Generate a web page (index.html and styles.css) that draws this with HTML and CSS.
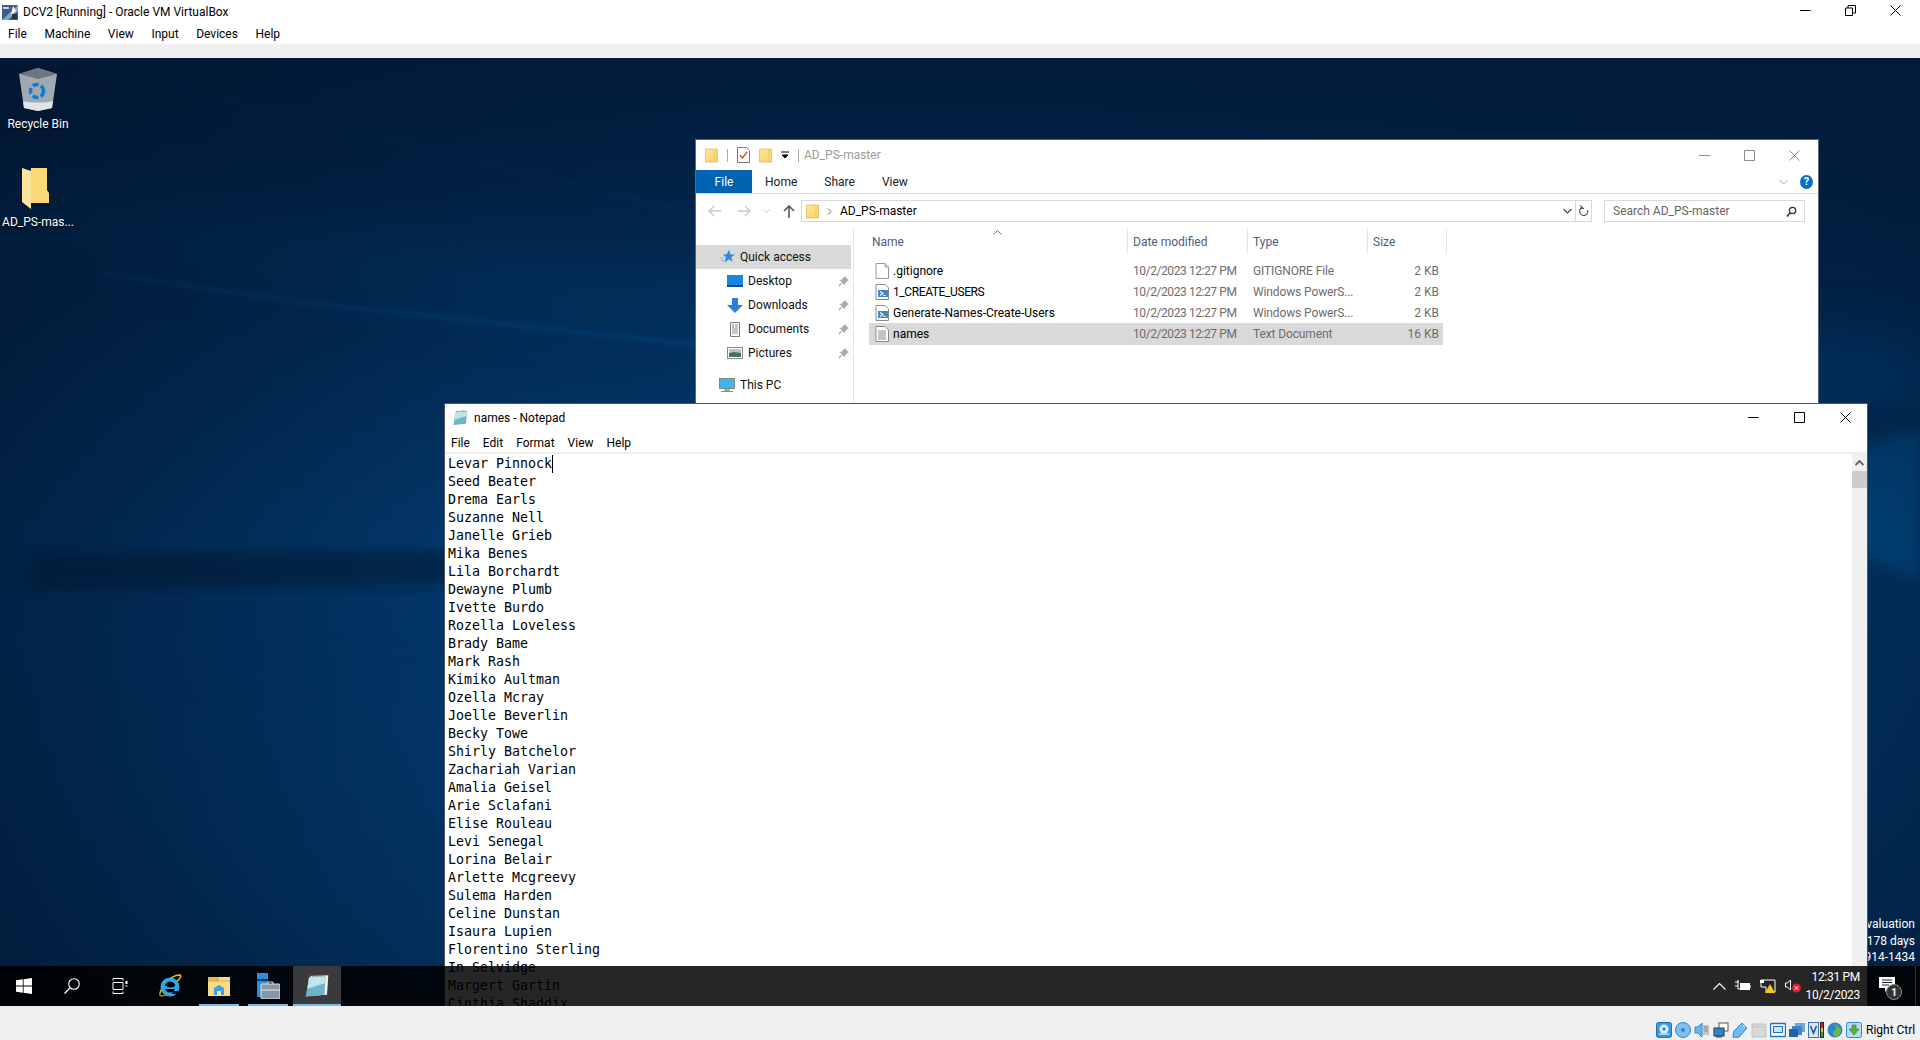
FILE: index.html
```html
<!DOCTYPE html>
<html lang="en">
<head>
<meta charset="utf-8">
<title>DCV2 [Running] - Oracle VM VirtualBox</title>
<link rel="stylesheet" href="styles.css">
</head>
<body>
<svg class="defs" width="0" height="0">
  <defs>
    <linearGradient id="fold" x1="0" y1="0" x2="1" y2="1"><stop offset="0" stop-color="#ffe9a0"/><stop offset="1" stop-color="#f6cf62"/></linearGradient>
    <symbol id="folder" viewBox="0 0 14 16"><path d="M.5 1h13v14H.5z" fill="url(#fold)" stroke="#e2b84f" stroke-width=".8"/><path d="M10.500 1v14" stroke="#f2cc66" stroke-width="1"/></symbol>
    <symbol id="pin" viewBox="0 0 12 12"><path d="M7 1l4 4-1.500.5-2 2-.3 2L5 7.300 2 10.500l-.8-.8L4.500 6.700 2.300 4.500l2-.3 2-2z" fill="#a9a9a9"/></symbol>
    <symbol id="psfile" viewBox="0 0 14 16"><path d="M1 .5h9l3.500 3.500v11.500H1z" fill="#fff" stroke="#8a8a8a"/><rect x="3" y="6" width="10" height="7" fill="#3f8ac6"/><path d="M5 7.500l3 2-3 2" fill="none" stroke="#fff" stroke-width="1.100"/><path d="M8 11.500h3" stroke="#cfe4f5"/></symbol>
    <symbol id="txtfile" viewBox="0 0 14 16"><path d="M1 .5h9l3.500 3.500v11.500H1z" fill="#fff" stroke="#8a8a8a"/><path d="M3 5h8M3 7h8M3 9h8M3 11h8M3 13h8" stroke="#8a8a8a"/></symbol>
    <symbol id="blank" viewBox="0 0 14 16"><path d="M1 .5h9l3.500 3.500v11.500H1z" fill="#fff" stroke="#9a9a9a"/><path d="M10 .5V4h3.500" fill="none" stroke="#9a9a9a"/></symbol>
    <symbol id="notepad" viewBox="0 0 18 18"><path d="M4 1.500L17.500 1l-1 14.500L3 16.500z" fill="#eef3f3"/><path d="M3 2.500L15.500 1.500 14.500 15.500 .5 17z" fill="#6fb3c9"/><path d="M3 2.500L15.500 1.500 15 7 1.800 11z" fill="#bfe4ea"/><path d="M3.500 1.800L15.500 1" stroke="#7a7a7a" stroke-width="1.400" stroke-dasharray="1 1"/></symbol>
    <radialGradient id="wpA" cx=".42" cy=".55" r=".75"><stop offset="0" stop-color="#03437f"/><stop offset=".55" stop-color="#023566"/><stop offset="1" stop-color="#011f40"/></radialGradient>
    <linearGradient id="wpTop" x1="0" y1="0" x2="0" y2="1"><stop offset="0" stop-color="#011a38" stop-opacity=".9"/><stop offset=".3" stop-color="#011a38" stop-opacity=".35"/><stop offset=".5" stop-color="#011a38" stop-opacity="0"/></linearGradient>
    <linearGradient id="wpLeft" x1="0" y1="0" x2="1" y2="0"><stop offset="0" stop-color="#01142c" stop-opacity=".55"/><stop offset=".25" stop-color="#01142c" stop-opacity=".12"/><stop offset=".4" stop-color="#01142c" stop-opacity="0"/></linearGradient>
    <filter id="bl8"><feGaussianBlur stdDeviation="8"/></filter>
    <filter id="bl3"><feGaussianBlur stdDeviation="2.500"/></filter>
    <filter id="bl30"><feGaussianBlur stdDeviation="30"/></filter>
  </defs>
</svg>

<header class="vb-title">
  <svg class="vb-logo" width="16" height="16" viewBox="0 0 16 16"><rect x="0" y="1" width="16" height="15" fill="#3f5c82"/><path d="M0 16L16 1v6L6 16z" fill="#7da6cf"/><rect x="1" y="3" width="6" height="2" fill="#c9d6e5"/><rect x="10" y="10" width="5" height="5" fill="#22364f"/><path d="M11 2l3 5-5 4z" fill="#fff"/></svg>
  <span>DCV2 [Running] - Oracle VM VirtualBox</span>
  <div class="vb-ctrls">
    <svg width="11" height="11" viewBox="0 0 11 11"><path d="M0 5.500h10.500" stroke="#000"/></svg>
    <svg width="11" height="11" viewBox="0 0 11 11"><path d="M.5 3h7v7.500h-7zM3 3V.5h7.500V8H8" fill="none" stroke="#000"/></svg>
    <svg width="11" height="11" viewBox="0 0 11 11"><path d="M.5.500l10 10M10.500.500l-10 10" stroke="#000"/></svg>
  </div>
</header>
<nav class="vb-menu">
  <span>File</span><span>Machine</span><span>View</span><span>Input</span><span>Devices</span><span>Help</span>
</nav>
<div class="vb-strip"></div>

<main class="guest">
  <svg class="wallpaper" width="1920" height="948" viewBox="0 0 1920 948">
    <rect width="1920" height="948" fill="url(#wpA)"/>
    <path d="M0 120L500 190 1000 270 1920 290V330L1000 300 400 230 0 170z" fill="#04528f" opacity=".55" filter="url(#bl30)"/>
    <path d="M60 0L300 60 700 157" fill="none" stroke="#0a4a85" stroke-width="5" opacity=".45" filter="url(#bl3)"/>
    <path d="M100 215L300 244 700 287 1000 330 1300 340" fill="none" stroke="#0a5ca6" stroke-width="4" opacity=".7" filter="url(#bl3)"/>
    <path d="M1820 430C1850 390 1880 380 1920 372V520C1880 510 1850 490 1820 480z" fill="#06528f" opacity=".45" filter="url(#bl8)"/>
    <path d="M0 540L1000 590 1000 640 0 620z" fill="#02396f" opacity=".5" filter="url(#bl30)"/>
    <path d="M30 497L460 492 460 526 30 532z" fill="#01132c" opacity=".5" filter="url(#bl8)"/>
    <rect width="1920" height="948" fill="url(#wpTop)"/>
    <rect width="1920" height="948" fill="url(#wpLeft)"/>
  </svg>

  <div class="desk-icon desk-recycle">
    <svg width="38" height="43" viewBox="0 0 38 43"><path d="M0 6L19 0l19 6-5 34-14 3-14-3z" fill="#9fa9b1"/><path d="M0 6l19 5 19-5-19-6z" fill="#6b7680"/><path d="M4 33c8 2 22 2 30 0l-1 7-14 3-14-3z" fill="#dfe3e6"/><circle cx="18" cy="23" r="6.500" fill="none" stroke="#1479d6" stroke-width="3.500" stroke-dasharray="6 2.500"/></svg>
    <span>Recycle Bin</span>
  </div>
  <div class="desk-icon desk-folder">
    <svg width="28" height="41" viewBox="0 0 28 41"><path d="M9 0h16v22l2 3v10H8V12z" fill="#f9d978"/><path d="M0 0l9 3v38L0 34z" fill="#fce59a"/></svg>
    <span>AD_PS-mas...</span>
  </div>

  <div class="watermark">
    <div>Windows Server 2019 Standard Evaluation</div>
    <div>Windows License valid for 178 days</div>
    <div>Build 17763.rs5_release.180914-1434</div>
  </div>

  <section class="win explorer">
    <div class="ex-title">
      <svg width="13" height="15"><use href="#folder"/></svg>
      <i class="qsep"></i>
      <svg width="13" height="16" viewBox="0 0 13 16"><path d="M.5.500h9l3 3v12H.5z" fill="#fff" stroke="#777"/><path d="M3 8l2.500 3L10 5" fill="none" stroke="#d8471e" stroke-width="1.300"/></svg>
      <svg width="13" height="15"><use href="#folder"/></svg>
      <svg width="8" height="8" viewBox="0 0 8 8"><path d="M0 1h8M1 4h6l-3 3z" stroke="#000" stroke-width="1" fill="#000"/></svg>
      <i class="qsep"></i>
      <span class="ex-name">AD_PS-master</span>
      <div class="ex-ctrls">
        <svg width="11" height="11" viewBox="0 0 11 11"><path d="M0 5.500h11" stroke="#8a8a8a"/></svg>
        <svg width="11" height="11" viewBox="0 0 11 11"><path d="M.5.500h10v10H.5z" fill="none" stroke="#8a8a8a"/></svg>
        <svg width="11" height="11" viewBox="0 0 11 11"><path d="M.5.500l10 10M10.500.500l-10 10" stroke="#8a8a8a"/></svg>
      </div>
    </div>
    <div class="ex-tabs">
      <span class="tab-file">File</span>
      <span class="tab">Home</span><span class="tab">Share</span><span class="tab">View</span>
      <div class="ex-help">
        <svg width="9" height="6" viewBox="0 0 9 6"><path d="M.5 1l4 4 4-4" fill="none" stroke="#a9a9a9"/></svg>
        <span class="help-dot">?</span>
      </div>
    </div>
    <div class="ex-addr">
      <div class="nav-btns">
        <svg width="13" height="12" viewBox="0 0 13 12"><path d="M6 1L1 6l5 5M1 6h12" fill="none" stroke="#c9c9c9" stroke-width="1.400"/></svg>
        <svg width="13" height="12" viewBox="0 0 13 12"><path d="M7 1l5 5-5 5M12 6H0" fill="none" stroke="#c9c9c9" stroke-width="1.400"/></svg>
        <svg width="7" height="5" viewBox="0 0 7 5"><path d="M.5.500l3 3 3-3" fill="none" stroke="#c9c9c9"/></svg>
        <svg width="12" height="13" viewBox="0 0 12 13"><path d="M1 6l5-5 5 5M6 1v12" fill="none" stroke="#555" stroke-width="1.600"/></svg>
      </div>
      <div class="addr-box">
        <svg width="13" height="15"><use href="#folder"/></svg>
        <svg width="5" height="7" viewBox="0 0 5 7"><path d="M1 .5l3 3-3 3" fill="none" stroke="#666"/></svg>
        <span>AD_PS-master</span>
        <svg class="addr-drop" width="9" height="6" viewBox="0 0 9 6"><path d="M.5 1l4 4 4-4" fill="none" stroke="#444" stroke-width="1.200"/></svg>
        <div class="addr-refresh"><svg width="10" height="12" viewBox="0 0 10 12"><path d="M8.500 5a4 4 0 1 1-6.500-1.500L4 2M2 0v3.500h3" fill="none" stroke="#555" stroke-width="1.100"/></svg></div>
      </div>
      <div class="search-box">
        <span>Search AD_PS-master</span>
        <svg width="11" height="11" viewBox="0 0 11 11"><circle cx="6.500" cy="4.500" r="3.200" fill="none" stroke="#333" stroke-width="1.300"/><path d="M4 7l-3 3.500" stroke="#333" stroke-width="1.600"/></svg>
      </div>
    </div>
    <div class="ex-body">
      <aside class="ex-nav">
        <div class="nav-row nav-top nav-sel">
          <svg width="15" height="14" viewBox="0 0 15 14"><path d="M9 0l1.500 4.500H15l-3.700 2.800L12.700 12 9 9.200 4.500 12.500 6 7.300 3 4.500h3.500z" fill="#2a8be0"/><path d="M0 8h4M1 10.500h3" stroke="#8ac1ef"/></svg>
          <span>Quick access</span>
        </div>
        <div class="nav-row nav-sub">
          <svg width="16" height="12" viewBox="0 0 16 12"><rect width="16" height="11" fill="#1b86e0"/><rect y="10" width="16" height="2" fill="#0c4f8a"/></svg>
          <span>Desktop</span><svg class="pin" width="13" height="13"><use href="#pin"/></svg>
        </div>
        <div class="nav-row nav-sub">
          <svg width="16" height="15" viewBox="0 0 16 15"><path d="M5 0h6v7h5l-8 8-8-8h5z" fill="#2a80d8"/></svg>
          <span>Downloads</span><svg class="pin" width="13" height="13"><use href="#pin"/></svg>
        </div>
        <div class="nav-row nav-sub">
          <svg width="16" height="15" viewBox="0 0 16 15"><path d="M3.500.5h9v14h-9z" fill="#fff" stroke="#7b7b7b"/><path d="M5 3h2M5 5h2" stroke="#2a80d8"/><path d="M8 3h3M8 5h3M5 7h6M5 9h6M5 11h6" stroke="#8a8a8a"/></svg>
          <span>Documents</span><svg class="pin" width="13" height="13"><use href="#pin"/></svg>
        </div>
        <div class="nav-row nav-sub">
          <svg width="16" height="12" viewBox="0 0 16 12"><rect x=".5" y=".5" width="15" height="11" fill="#fff" stroke="#8a8a8a"/><rect x="2" y="2" width="12" height="4" fill="#a8c8d8"/><path d="M2 6l5-1 7 1v4H2z" fill="#47705c"/></svg>
          <span>Pictures</span><svg class="pin" width="13" height="13"><use href="#pin"/></svg>
        </div>
        <div class="nav-row nav-top nav-pc">
          <svg width="16" height="15" viewBox="0 0 16 15"><rect x=".5" y=".5" width="15" height="10" fill="#41b3ea" stroke="#7f8a92"/><path d="M6 11h4v2H6zM2 13.500h12" stroke="#8a8a8a" fill="#c9c9c9"/></svg>
          <span>This PC</span>
        </div>
      </aside>
      <div class="ex-list">
        <div class="ex-head">
          <span class="col-name">Name<svg class="sort" width="9" height="5" viewBox="0 0 9 5"><path d="M.5 4.500l4-4 4 4" fill="none" stroke="#777"/></svg></span>
          <span class="col-date">Date modified</span>
          <span class="col-type">Type</span>
          <span class="col-size">Size</span>
        </div>
        <div class="ex-rows">
          <div class="row"><span class="r-name"><svg width="14" height="16"><use href="#blank"/></svg>.gitignore</span><span class="r-dim r-date">10/2/2023 12:27 PM</span><span class="r-dim r-type">GITIGNORE File</span><span class="r-dim r-size">2 KB</span></div>
          <div class="row"><span class="r-name"><svg width="14" height="16"><use href="#psfile"/></svg><span class="caps">1_CREATE_USERS</span></span><span class="r-dim r-date">10/2/2023 12:27 PM</span><span class="r-dim r-type">Windows PowerS...</span><span class="r-dim r-size">2 KB</span></div>
          <div class="row"><span class="r-name"><svg width="14" height="16"><use href="#psfile"/></svg>Generate-Names-Create-Users</span><span class="r-dim r-date">10/2/2023 12:27 PM</span><span class="r-dim r-type">Windows PowerS...</span><span class="r-dim r-size">2 KB</span></div>
          <div class="row row-sel"><span class="r-name"><svg width="14" height="16"><use href="#txtfile"/></svg>names</span><span class="r-dim r-date">10/2/2023 12:27 PM</span><span class="r-dim r-type">Text Document</span><span class="r-dim r-size">16 KB</span></div>
        </div>
      </div>
    </div>
  </section>

  <section class="win notepad">
    <div class="np-title">
      <svg width="16" height="16"><use href="#notepad"/></svg>
      <span>names - Notepad</span>
      <div class="np-ctrls">
        <svg width="11" height="11" viewBox="0 0 11 11"><path d="M0 5.500h10.500" stroke="#000"/></svg>
        <svg width="11" height="11" viewBox="0 0 11 11"><path d="M.5.500h10v10H.5z" fill="none" stroke="#000"/></svg>
        <svg width="11" height="11" viewBox="0 0 11 11"><path d="M.5.500l10 10M10.500.500l-10 10" stroke="#000"/></svg>
      </div>
    </div>
    <div class="np-menu"><span>File</span><span>Edit</span><span>Format</span><span>View</span><span>Help</span></div>
    <div class="np-body">
      <div class="np-text">
        <div><span class="caret">Levar Pinnock</span></div>
        <div>Seed Beater</div><div>Drema Earls</div><div>Suzanne Nell</div><div>Janelle Grieb</div><div>Mika Benes</div><div>Lila Borchardt</div><div>Dewayne Plumb</div><div>Ivette Burdo</div><div>Rozella Loveless</div><div>Brady Bame</div><div>Mark Rash</div><div>Kimiko Aultman</div><div>Ozella Mcray</div><div>Joelle Beverlin</div><div>Becky Towe</div><div>Shirly Batchelor</div><div>Zachariah Varian</div><div>Amalia Geisel</div><div>Arie Sclafani</div><div>Elise Rouleau</div><div>Levi Senegal</div><div>Lorina Belair</div><div>Arlette Mcgreevy</div><div>Sulema Harden</div><div>Celine Dunstan</div><div>Isaura Lupien</div><div>Florentino Sterling</div><div>In Selvidge</div><div>Margert Gartin</div><div>Cinthia Shaddix</div>
      </div>
      <div class="np-scroll">
        <div class="sb-arrow"><svg width="9" height="6" viewBox="0 0 9 6"><path d="M.5 5l4-4 4 4" fill="none" stroke="#606060" stroke-width="1.800"/></svg></div>
        <div class="sb-thumb"></div>
      </div>
    </div>
  </section>

  <footer class="taskbar">
    <div class="tb-btn"><svg width="16" height="16" viewBox="0 0 16 16"><path d="M0 2.300L6.800 1.300V7.600H0zM7.600 1.200L16 0V7.600H7.600zM0 8.400H6.800V14.700L0 13.700zM7.600 8.400H16V16L7.600 14.800z" fill="#fff"/></svg></div>
    <div class="tb-btn"><svg width="16" height="16" viewBox="0 0 16 16"><circle cx="10" cy="6" r="5.300" fill="none" stroke="#fff" stroke-width="1.100"/><path d="M6 10l-5.500 5.500" stroke="#fff" stroke-width="1.200"/></svg></div>
    <div class="tb-btn"><svg width="16" height="16" viewBox="0 0 16 16"><path d="M1 .5h10M1 15.500h10M1 4.500h10v7H1zM1 .5v2M11 .5v2M1 13.500v2M11 13.500v2" fill="none" stroke="#fff"/><path d="M13.500 3h2v3h-2zM13.500 7.500h2v1h-2z" fill="#fff"/></svg></div>
    <div class="tb-btn tb-first"><svg width="23" height="24" viewBox="0 0 23 24"><path d="M1 19C5 7 14 1 21 1c2 1-1 5-4 7" fill="none" stroke="#f2b619" stroke-width="1.600"/><circle cx="11" cy="13" r="7.500" fill="none" stroke="#2da7e6" stroke-width="4"/><path d="M4 12h15v3H4z" fill="#2da7e6"/><path d="M8 12.500h7" stroke="#000" stroke-width="1.500"/><path d="M14 17h6l-2 3h-5z" fill="#000"/><path d="M1 19c-1 4 3 4 7 1" fill="none" stroke="#c98f12" stroke-width="1.400"/></svg></div>
    <div class="tb-btn tb-open"><svg width="22" height="20" viewBox="0 0 22 20"><path d="M0 1h22v19H0z" fill="#fbdc86"/><path d="M0 1h11v4H0z" fill="#e8b94c"/><path d="M0 5h22" stroke="#d8aa45"/><path d="M6 19v-7l5-3 5 3v7h-3v-4H9v4z" fill="#38a2e0"/></svg></div>
    <div class="tb-btn tb-open"><svg width="24" height="26" viewBox="0 0 24 26"><rect x="1" y="0" width="11" height="24" fill="#2b8ede"/><path d="M1 7h11" stroke="#000" stroke-width="1.200"/><rect x="5" y="11" width="19" height="15" rx="1" fill="#8597a6" stroke="#dfe6ea"/><path d="M12 11V9h5v2M5 17h19" fill="none" stroke="#dfe6ea"/></svg></div>
    <div class="tb-btn tb-open tb-active"><svg width="24" height="24"><use href="#notepad"/></svg></div>
    <div class="tray">
      <svg width="13" height="8" viewBox="0 0 13 8"><path d="M.5 7.500l6-6 6 6" fill="none" stroke="#fff" stroke-width="1.100"/></svg>
      <svg width="16" height="13" viewBox="0 0 16 13"><rect x="5" y="3" width="10" height="7" fill="#fff"/><path d="M0 2h4M0 6h3V0M3 6v3h2M15 5v3" stroke="#fff" fill="none"/></svg>
      <svg width="16" height="14" viewBox="0 0 16 14"><path d="M1 1h14v12H6V8H1z" fill="none" stroke="#fff"/><rect x="0" y="1" width="4" height="3" fill="#fff"/><path d="M10 5l5 9H5z" fill="#f9c813"/></svg>
      <svg width="16" height="14" viewBox="0 0 16 14"><path d="M.5 4h2l3-3v10l-3-3h-2z" fill="none" stroke="#fff"/><circle cx="11.500" cy="9" r="4.500" fill="#d8202f"/><path d="M9.800 7.300l3.400 3.400M13.200 7.300l-3.400 3.400" stroke="#fff"/></svg>
      <div class="clock"><span>12:31 PM</span><span>10/2/2023</span></div>
      <div class="bubble"><svg width="16" height="16" viewBox="0 0 16 16"><path d="M0 0h16v11H9l-3 4v-4H0z" fill="#fff"/><path d="M3 3h10M3 5.500h10M3 8h7" stroke="#222"/></svg><span class="badge">1</span></div>
    </div>
  </footer>
</main>

<footer class="vb-status">
  <svg width="16" height="16" viewBox="0 0 16 16"><rect x=".5" y=".5" width="15" height="15" rx="2" fill="#3a9ae0" stroke="#2371b5"/><circle cx="8" cy="7" r="4.500" fill="#d8ecfb"/><circle cx="8" cy="7" r="1.500" fill="#2371b5"/><path d="M3 12h10" stroke="#fff"/></svg>
  <svg width="16" height="16" viewBox="0 0 16 16"><circle cx="8" cy="8" r="7.500" fill="#7dc0ef" stroke="#2c86d0"/><circle cx="8" cy="8" r="2" fill="#2c86d0"/></svg>
  <svg width="16" height="16" viewBox="0 0 16 16"><path d="M1 5h3l4-4v14l-4-4H1z" fill="#6db6ec" stroke="#2c86d0"/><path d="M9 3h6v10H9z" fill="#c4c4c4"/><path d="M10 5h4M10 7h4M10 9h4" stroke="#8a8a8a"/></svg>
  <svg width="16" height="16" viewBox="0 0 16 16"><rect x="6" y="1" width="9" height="8" fill="#fff" stroke="#555"/><rect x="1" y="6" width="10" height="8" fill="#2c86d0" stroke="#333"/><path d="M3 15h6" stroke="#333"/></svg>
  <svg width="16" height="16" viewBox="0 0 16 16"><path d="M10 1l5 5-8 9c-3 1-6 1-6 0 0-2 1-4 1-6z" fill="#74bbf0" stroke="#2c86d0"/><path d="M11 3l2 2" stroke="#fff"/></svg>
  <svg width="16" height="16" viewBox="0 0 16 16"><path d="M1 2h14v13H1z" fill="#d8d8d8" stroke="#c4c4c4"/><path d="M1 5h14" stroke="#c4c4c4"/></svg>
  <svg width="16" height="16" viewBox="0 0 16 16"><rect x=".5" y="1.500" width="15" height="13" rx="1" fill="#fff" stroke="#1f73bd" stroke-width="1.400"/><rect x="3.500" y="4.500" width="9" height="6" fill="#cfe6f8" stroke="#1f73bd"/></svg>
  <svg width="16" height="16" viewBox="0 0 16 16"><rect x="6" y="1" width="10" height="9" fill="#6aa6d8"/><rect x="3" y="4" width="10" height="9" fill="#3e86c8"/><rect x="0" y="7" width="9" height="8" fill="#1f62a8"/></svg>
  <svg width="16" height="16" viewBox="0 0 16 16"><rect x=".5" y=".5" width="10" height="15" fill="#d7e5f4" stroke="#4475b0"/><path d="M2.500 4l3 7 3-7" fill="none" stroke="#1f4f8a" stroke-width="1.500"/><rect x="12" y="0" width="4" height="16" fill="#222"/><rect x="13" y="1" width="2" height="5" fill="#d8202f"/><rect x="13" y="6" width="2" height="4" fill="#f0c419"/><rect x="13" y="10" width="2" height="5" fill="#39a935"/></svg>
  <svg width="16" height="16" viewBox="0 0 16 16"><circle cx="8" cy="8" r="7.500" fill="#2c86d0"/><path d="M5 2c3 1 5 3 4 5s-3 1-3 4 2 3 3 4c3-1 5-3 5-6s-4-6-9-7z" fill="#69b84a"/></svg>
  <svg width="16" height="16" viewBox="0 0 16 16"><rect x=".5" y=".5" width="15" height="15" rx="2" fill="#b6dbf6" stroke="#2c86d0"/><path d="M6 3h4v4h3l-5 6-5-6h3z" fill="#52b53a" stroke="#2f7d1f" stroke-width=".6"/></svg>
  <span class="host-key">Right Ctrl</span>
</footer>
</body>
</html>
```

FILE: styles.css
```css
* { box-sizing: border-box; }
html, body { margin: 0; height: 1040px; overflow: hidden; }
body {
  width: 1920px;
  display: flex;
  flex-direction: column;
  font-family: Roboto, "Noto Sans", sans-serif;
  font-size: 12px;
  color: #000;
  background: #fff;
}
svg { display: block; flex: none; }
.defs { position: absolute; }

/* VirtualBox host chrome */
.vb-title { height: 22px; display: flex; align-items: center; padding-left: 2px; padding-top: 2px; gap: 5px; }
.vb-ctrls { margin-left: auto; display: flex; gap: 34px; padding-right: 19px; margin-top: -3px; }
.vb-menu { height: 22px; display: flex; align-items: center; padding-left: 8px; padding-top: 2px; gap: 17.6px; }
.vb-strip { height: 14px; background: #f0f0f0; }
.vb-status {
  height: 34px;
  background: #f0f0f0;
  display: flex;
  align-items: center;
  justify-content: flex-end;
  gap: 3px;
  padding-top: 14px;
  white-space: nowrap;
  overflow: hidden;
}
.host-key { width: 54px; margin-left: 1px; font-size: 12px; }

/* Guest desktop */
.guest { position: relative; height: 948px; overflow: hidden; background: #02305f; }
.wallpaper { position: absolute; left: 0; top: 0; }
.desk-icon {
  position: absolute;
  left: 0;
  width: 76px;
  display: flex;
  flex-direction: column;
  align-items: center;
  color: #fff;
  text-shadow: 0 1px 2px #000;
}
.desk-recycle { top: 10px; }
.desk-recycle span { margin-top: 6px; }
.desk-folder { top: 110px; }
.desk-folder svg { margin-right: 4px; }
.desk-folder span { margin-top: 6px; }
.watermark {
  position: absolute;
  right: 5px;
  top: 858px;
  text-align: right;
  color: #fff;
  line-height: 16.5px;
  white-space: nowrap;
}

.win { position: absolute; background: #fff; display: flex; flex-direction: column; }

/* Explorer */
.explorer { left: 695px; top: 81px; width: 1124px; height: 271px; border: 1px solid #5d6670; }
.ex-title { height: 30px; flex: none; display: flex; align-items: center; gap: 9px; padding-left: 9px; }
.qsep { width: 1px; height: 13px; background: #a8a8a8; }
.ex-name { color: #9a9a9a; margin-left: -4px; }
.ex-ctrls { margin-left: auto; display: flex; gap: 34px; padding-right: 18px; }
.ex-tabs { height: 24px; flex: none; display: flex; align-items: stretch; border-bottom: 1px solid #dadada; }
.tab-file { width: 56px; background: #0063b1; color: #fff; display: flex; align-items: center; justify-content: center; }
.tab { display: flex; align-items: center; margin-left: 13px; margin-right: 14px; color: #222; }
.ex-help { margin-left: auto; display: flex; align-items: center; gap: 12px; padding-right: 5px; }
.help-dot {
  width: 13px; height: 14px; border-radius: 50%;
  background: #0b6fc9; color: #fff; font-weight: 700; font-size: 11px;
  display: flex; align-items: center; justify-content: center;
}
.ex-addr { height: 22px; flex: none; margin-top: 6px; display: flex; align-items: stretch; }
.nav-btns { width: 105px; display: flex; align-items: center; padding-left: 12px; gap: 17px; }
.nav-btns svg:nth-child(2) { margin-right: -5px; }
.nav-btns svg:nth-child(3) { margin-right: -4px; }
.addr-box {
  width: 791px;
  border: 1px solid #d9d9d9;
  display: flex;
  align-items: center;
  padding-left: 4px;
  gap: 8px;
}
.addr-drop { margin-left: auto; }
.addr-refresh { width: 16px; height: 100%; border-left: 1px solid #d9d9d9; display: flex; align-items: center; justify-content: center; margin-left: -5px; }
.search-box {
  width: 201px;
  margin-left: 12px;
  border: 1px solid #d9d9d9;
  display: flex;
  align-items: center;
  justify-content: space-between;
  padding: 0 7px 0 8px;
  color: #666;
}
.ex-body { flex: 1; display: flex; margin-top: 7px; min-height: 0; }
.ex-nav { width: 158px; flex: none; padding-top: 16px; border-right: 1px solid #e5e5e5; }
.nav-row { height: 24px; display: flex; align-items: center; gap: 5px; color: #111; }
.nav-top { padding-left: 24px; }
.nav-sub { padding-left: 31px; }
.nav-sel { background: #d9d9d9; margin-right: 2px; }
.pin { margin-left: auto; margin-right: 3px; }
.nav-pc { margin-top: 8px; padding-left: 23px; }
.ex-list { flex: 1; padding-left: 15px; }
.ex-head { height: 25px; display: flex; align-items: stretch; color: #4c607a; }
.ex-head span { display: flex; align-items: center; border-right: 1px solid #e5e5e5; padding-left: 5px; position: relative; }
.col-name { width: 259px; padding-left: 3px !important; }
.col-date { width: 120px; }
.col-type { width: 120px; }
.col-size { width: 79px; }
.sort { position: absolute; left: 124px; top: 1px; }
.ex-rows { margin-top: 6px; width: 574px; }
.row {
  height: 21px;
  display: grid;
  grid-template-columns: 264px 120px 1fr auto;
  align-items: center;
  padding-right: 4px;
}
.row-sel { background: #d9d9d9; height: 22px; }
.r-name { display: flex; align-items: center; gap: 4px; padding-left: 6px; }
.r-dim { color: #6d6d6d; }
.r-date { letter-spacing: -.42px; }
.r-type { letter-spacing: -.12px; }
.caps { letter-spacing: -.4px; }

/* Notepad */
.notepad { left: 444px; top: 345px; width: 1424px; height: 640px; border: 1px solid #4a5560; border-bottom: 0; }
.np-title { height: 28px; flex: none; display: flex; align-items: center; gap: 5px; padding-left: 8px; padding-bottom: 1px; }
.np-ctrls { margin-left: auto; display: flex; gap: 35px; padding-right: 16px; }
.np-menu { height: 22px; flex: none; display: flex; align-items: center; padding-left: 6px; gap: 13px; border-bottom: 2px solid #f0f0f0; padding-top: 2px; }
.np-body { flex: 1; display: flex; min-height: 0; }
.np-text {
  flex: 1;
  padding: 1px 0 0 3px;
  font-family: "DejaVu Sans Mono", "Liberation Mono", monospace;
  font-size: 13.3px;
  line-height: 18px;
  overflow: hidden;
  white-space: nowrap;
  color: #000;
}
.caret { border-right: 1px solid #000; display: inline-block; height: 18px; }
.np-scroll { width: 15px; background: #f0f0f0; flex: none; }
.sb-arrow { height: 17px; display: flex; align-items: center; justify-content: center; }
.sb-thumb { height: 17px; background: #cdcdcd; }

/* Taskbar */
.taskbar {
  position: absolute;
  left: 0; right: 0;
  top: 908px;
  height: 40px;
  background: rgba(0, 0, 0, .85);
  display: flex;
  align-items: stretch;
  color: #fff;
}
.tb-btn { width: 48px; display: flex; align-items: center; justify-content: center; position: relative; }
.tb-first { margin-left: 2px; }
.tb-btn + .tb-open { margin-left: 1px; }
.tb-open::after {
  content: "";
  position: absolute;
  left: 4px; right: 4px; bottom: 0;
  height: 2px;
  background: #76b9ed;
}
.tb-active { background: #3a3a3c; }
.tb-active::after { left: 0; right: 0; }
.tray { margin-left: auto; display: flex; align-items: center; padding-right: 19px; gap: 9px; border-right: 1px solid #333; margin-right: 4px; }
.clock { display: flex; flex-direction: column; align-items: flex-end; line-height: 18px; margin-left: -4px; letter-spacing: -.3px; }
.bubble { position: relative; margin-left: 10px; margin-right: 1px; margin-top: -2px; }
.badge {
  position: absolute;
  left: 7px; top: 7px;
  width: 16px; height: 16px;
  border-radius: 50%;
  border: 1px solid #8a8a8a;
  background: #333;
  font-size: 10px;
  font-weight: 700;
  display: flex;
  align-items: center;
  justify-content: center;
}
```
